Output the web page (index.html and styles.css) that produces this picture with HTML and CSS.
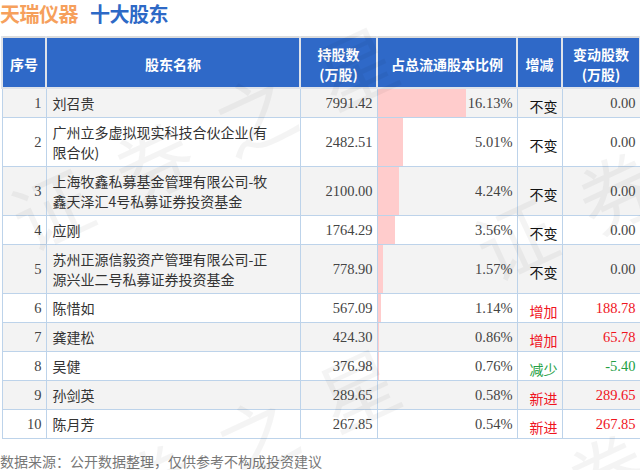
FILE: index.html
```html
<!DOCTYPE html>
<html lang="zh-CN">
<head>
<meta charset="utf-8">
<title>天瑞仪器 十大股东</title>
<link rel="stylesheet" href="styles.css">
</head>
<body>
<div class="page">
  <h1 class="title"><span class="company">天瑞仪器</span><span class="topic">十大股东</span></h1>
  <div class="table-wrap">
    <table class="holders">
      <colgroup>
        <col class="c-no"><col class="c-name"><col class="c-hold"><col class="c-pct"><col class="c-chg"><col class="c-delta">
      </colgroup>
      <thead>
        <tr>
          <th>序号</th>
          <th>股东名称</th>
          <th>持股数<br>(万股)</th>
          <th>占总流通股本比例</th>
          <th>增减</th>
          <th>变动股数<br>(万股)</th>
        </tr>
      </thead>
      <tbody>
        <tr>
          <td class="num">1</td><td class="name">刘召贵</td><td class="num">7991.42</td>
          <td class="pct"><div class="bar" style="width:88px"></div><span>16.13%</span></td>
          <td class="chg">不变</td><td class="num">0.00</td>
        </tr>
        <tr>
          <td class="num">2</td><td class="name">广州立多虚拟现实科技合伙企业(有限合伙)</td><td class="num">2482.51</td>
          <td class="pct"><div class="bar" style="width:25px"></div><span>5.01%</span></td>
          <td class="chg">不变</td><td class="num">0.00</td>
        </tr>
        <tr>
          <td class="num">3</td><td class="name">上海牧鑫私募基金管理有限公司-牧鑫天泽汇4号私募证券投资基金</td><td class="num">2100.00</td>
          <td class="pct"><div class="bar" style="width:21px"></div><span>4.24%</span></td>
          <td class="chg">不变</td><td class="num">0.00</td>
        </tr>
        <tr>
          <td class="num">4</td><td class="name">应刚</td><td class="num">1764.29</td>
          <td class="pct"><div class="bar" style="width:17px"></div><span>3.56%</span></td>
          <td class="chg">不变</td><td class="num">0.00</td>
        </tr>
        <tr>
          <td class="num">5</td><td class="name">苏州正源信毅资产管理有限公司-正源兴业二号私募证券投资基金</td><td class="num">778.90</td>
          <td class="pct"><div class="bar" style="width:5px"></div><span>1.57%</span></td>
          <td class="chg">不变</td><td class="num">0.00</td>
        </tr>
        <tr>
          <td class="num">6</td><td class="name">陈惜如</td><td class="num">567.09</td>
          <td class="pct"><div class="bar" style="width:3px"></div><span>1.14%</span></td>
          <td class="chg up">增加</td><td class="num up">188.78</td>
        </tr>
        <tr>
          <td class="num">7</td><td class="name">龚建松</td><td class="num">424.30</td>
          <td class="pct"><div class="bar" style="width:1px"></div><span>0.86%</span></td>
          <td class="chg up">增加</td><td class="num up">65.78</td>
        </tr>
        <tr>
          <td class="num">8</td><td class="name">吴健</td><td class="num">376.98</td>
          <td class="pct"><div class="bar" style="width:1px"></div><span>0.76%</span></td>
          <td class="chg down">减少</td><td class="num down">-5.40</td>
        </tr>
        <tr>
          <td class="num">9</td><td class="name">孙剑英</td><td class="num">289.65</td>
          <td class="pct"><span>0.58%</span></td>
          <td class="chg up">新进</td><td class="num up">289.65</td>
        </tr>
        <tr>
          <td class="num">10</td><td class="name">陈月芳</td><td class="num">267.85</td>
          <td class="pct"><span>0.54%</span></td>
          <td class="chg up">新进</td><td class="num up">267.85</td>
        </tr>
      </tbody>
    </table>
  </div>
  <p class="source">数据来源：公开数据整理，仅供参考不构成投资建议</p>
  <div class="watermark" aria-hidden="true">
    <span class="wm wm1">证券之星</span>
    <span class="wm wm2">证券之星</span>
    <span class="wm wm3">证券之星</span>
    <span class="wm wm4">证券之星</span>
  </div>
</div>
</body>
</html>
```
FILE: styles.css
```css
html, body {
  margin: 0;
  padding: 0;
  background: #ffffff;
}

.page {
  position: relative;
  width: 640px;
  height: 470px;
  overflow: hidden;
  font-family: "Noto Sans CJK SC", "Noto Sans", sans-serif;
  color: #333;
}

.title {
  margin: 0;
  height: 36px;
  line-height: 28px;
  font-size: 20px;
  font-weight: bold;
  letter-spacing: -0.5px;
}

.company {
  color: #f6a05c;
  margin-right: 12px;
}

.topic {
  color: #2d69c6;
}

.table-wrap {
  padding: 0 1px;
}

.holders {
  width: 638px;
  table-layout: fixed;
  border-collapse: collapse;
  border-top: 2px solid #dcdcdc;
  font-size: 14px;
}

.c-no { width: 44px; }
.c-name { width: 254px; }
.c-hold { width: 77px; }
.c-pct { width: 140px; }
.c-chg { width: 45px; }
.c-delta { width: 78px; }

.holders th {
  background: #2f69c8;
  color: #ffffff;
  font-weight: bold;
  line-height: 20px;
  padding: 6px 2px 3px;
  border: 2px solid #dfe3ea;
  border-top: 0;
  text-align: center;
  vertical-align: middle;
}

.holders td {
  border: 1px solid #bdd3ea;
  line-height: 20px;
  padding: 4px 4px;
  vertical-align: middle;
}

.holders tbody tr:nth-child(odd) td {
  background: #f3f3f3;
}

.holders tbody tr:nth-child(even) td {
  background: #ffffff;
}

.num {
  font-family: "Liberation Serif", "Times New Roman", serif;
  text-align: right;
  color: #444;
  font-size: 14.5px;
}

.name {
  padding-left: 6px !important;
  padding-right: 30px !important;
  color: #333;
}

.pct {
  position: relative;
  text-align: right;
  font-family: "Liberation Serif", "Times New Roman", serif;
  color: #444;
  font-size: 14.5px;
}

.pct span {
  position: relative;
}

.bar {
  position: absolute;
  left: 0;
  top: 0;
  bottom: 0;
  background: #ffcccc;
}

.chg {
  text-align: right;
  color: #111;
  padding-top: 7px !important;
  padding-bottom: 1px !important;
}

.up,
.chg.up {
  color: #f0141e;
}

.down,
.chg.down {
  color: #23a044;
}

.source {
  margin: 12px 0 0;
  font-size: 14px;
  line-height: 20px;
  color: #777;
}

.watermark {
  position: absolute;
  inset: 0;
  pointer-events: none;
  z-index: 5;
}

.wm {
  position: absolute;
  transform: translate(-50%, -50%) rotate(-25deg);
  font-size: 78px;
  letter-spacing: 34px;
  white-space: nowrap;
  color: rgba(0, 0, 0, 0.045);
  font-weight: normal;
  line-height: 1;
}

.wm1 { left: 218px; top: 128px; }
.wm2 { left: 220px; top: 450px; }
.wm3 { left: 682px; top: 158px; }
.wm4 { left: 672px; top: 440px; }
```
